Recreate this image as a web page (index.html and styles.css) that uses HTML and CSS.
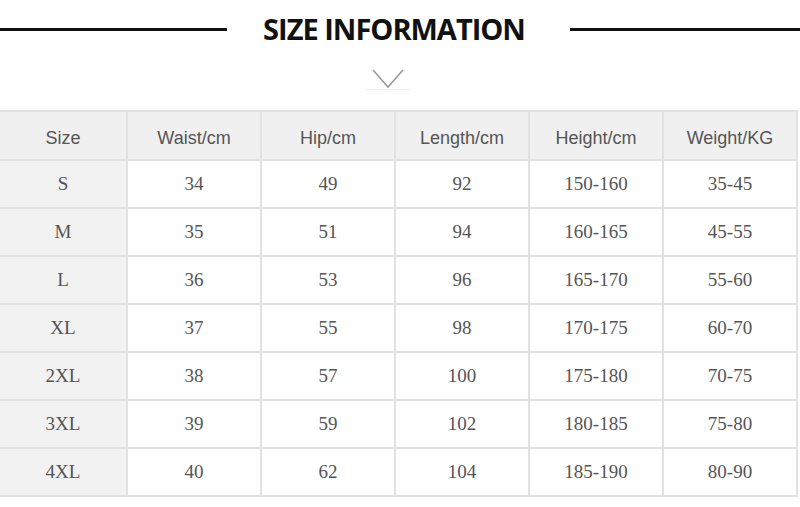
FILE: index.html
```html
<!DOCTYPE html>
<html>
<head>
<meta charset="utf-8">
<link rel="stylesheet" href="styles.css">
</head>
<body>
<div class="page">
  <header class="title-bar">
    <span class="rule rule-left"></span>
    <h1 class="title">SIZE INFORMATION</h1>
    <span class="rule rule-right"></span>
  </header>
  <div class="chevron-wrap">
    <svg class="chevron" width="44" height="22" viewBox="0 0 44 22">
      <polyline points="7,1 22,18 37,1" fill="none" stroke="#9a9a9a" stroke-width="1.6"/>
      <line x1="0" y1="20.5" x2="44" y2="20.5" stroke="#f0f0f0" stroke-width="1"/>
    </svg>
  </div>
  <table class="size-table">
    <colgroup>
      <col class="c-size"><col class="c-n"><col class="c-n"><col class="c-n"><col class="c-n"><col class="c-n">
    </colgroup>
    <thead>
      <tr><th>Size</th><th>Waist/cm</th><th>Hip/cm</th><th>Length/cm</th><th>Height/cm</th><th>Weight/KG</th></tr>
    </thead>
    <tbody>
      <tr><td class="sz">S</td><td>34</td><td>49</td><td>92</td><td>150-160</td><td>35-45</td></tr>
      <tr><td class="sz">M</td><td>35</td><td>51</td><td>94</td><td>160-165</td><td>45-55</td></tr>
      <tr><td class="sz">L</td><td>36</td><td>53</td><td>96</td><td>165-170</td><td>55-60</td></tr>
      <tr><td class="sz">XL</td><td>37</td><td>55</td><td>98</td><td>170-175</td><td>60-70</td></tr>
      <tr><td class="sz">2XL</td><td>38</td><td>57</td><td>100</td><td>175-180</td><td>70-75</td></tr>
      <tr><td class="sz">3XL</td><td>39</td><td>59</td><td>102</td><td>180-185</td><td>75-80</td></tr>
      <tr><td class="sz">4XL</td><td>40</td><td>62</td><td>104</td><td>185-190</td><td>80-90</td></tr>
    </tbody>
  </table>
</div>
</body>
</html>
```

FILE: styles.css
```css
html, body {
  margin: 0;
  padding: 0;
  background: #ffffff;
}

.page {
  width: 800px;
  height: 507px;
  overflow: hidden;
}

.title-bar {
  display: flex;
  align-items: center;
  height: 58px;
}

.rule {
  height: 3px;
  background: #111;
  flex: none;
}

.rule-left {
  width: 227px;
  margin-top: 1px;
}

.rule-right {
  width: 230px;
  margin-top: 1px;
  margin-left: auto;
}

.title {
  flex: 1;
  margin: 0;
  padding-right: 9px;
  text-align: center;
  font-family: "Open Sans", "Liberation Sans", sans-serif;
  font-weight: 700;
  font-size: 29px;
  letter-spacing: -1px;
  color: #111;
  line-height: 58px;
}

.chevron-wrap {
  height: 52px;
  display: flex;
  justify-content: center;
}

.chevron {
  margin-top: 11px;
  margin-left: -24px;
}

.size-table {
  border-collapse: collapse;
  table-layout: fixed;
  width: 797px;
  margin-left: -2px;
  color: #555;
}

.c-size { width: 128px; }
.c-n { width: 134px; }

.size-table th,
.size-table td {
  border: 2px solid #e2e2e2;
  text-align: center;
  vertical-align: middle;
  padding: 0;
}

.size-table th {
  height: 41px;
  padding-top: 6px;
  background: #f0f0f0;
  font-family: "Liberation Sans", Arial, sans-serif;
  font-weight: 400;
  font-size: 18px;
}

.size-table td {
  height: 46px;
  font-family: "Liberation Serif", "DejaVu Serif", serif;
  font-size: 19px;
}

.size-table td.sz {
  background: #f2f2f2;
}

.size-table th:first-child,
.size-table td:first-child {
  border-left-color: #f2f2f2;
}
```
